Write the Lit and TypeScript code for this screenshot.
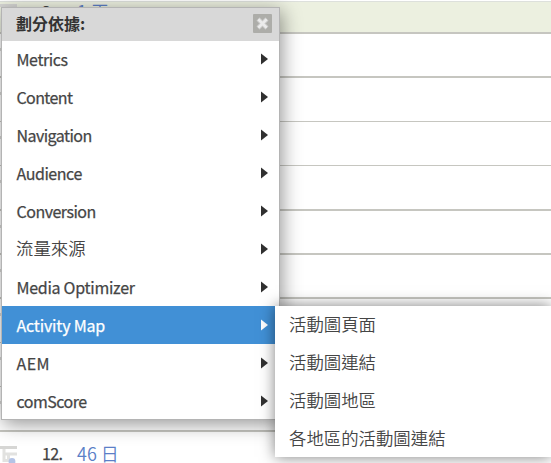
import { LitElement, html, css } from "lit";
import { customElement, property } from "lit/decorators.js";
import { classMap } from "lit/directives/class-map.js";
import { styleMap } from "lit/directives/style-map.js";

interface Entry {
  label: string;
  cjk?: boolean;
  tracking?: number;
  active?: boolean;
}

const entries: Entry[] = [
  { label: "Metrics", tracking: -0.4 },
  { label: "Content", tracking: -0.6 },
  { label: "Navigation", tracking: -0.55 },
  { label: "Audience", tracking: -0.45 },
  { label: "Conversion", tracking: -0.5 },
  { label: "流量來源", cjk: true },
  { label: "Media Optimizer", tracking: -0.28 },
  { label: "Activity Map", tracking: -0.18 },
  { label: "AEM", tracking: 0.4 },
  { label: "comScore", tracking: -0.5 },
];
entries[7].active = true;

const subEntries = ["活動圖頁面", "活動圖連結", "活動圖地區", "各地區的活動圖連結"];

interface Row {
  rank?: number;
  label?: string;
  thin?: boolean;
}

const rows: Row[] = [
  { rank: 2, label: "1 天" },
  {},
  { thin: true },
  { thin: true },
  {},
  {},
  {},
  { thin: true },
  { thin: true },
  {},
  { rank: 12, label: "46 日" },
];

@customElement("breakdown-icon")
class BreakdownIcon extends LitElement {
  static styles = css`
    :host { display: block; flex: none; width: 17px; height: 20px; }
    svg { display: block; }
  `;
  render() {
    return html`<svg width="17" height="20" viewBox="0 0 17 20">
      <path d="M0 1.5H17" stroke="#d6d6d4" stroke-width="3"/>
      <path d="M4 3V14.5H9M4 8H17M8.5 8V13" fill="none" stroke="#e2e2e0" stroke-width="3"/>
      <circle cx="12" cy="15.5" r="3.4" fill="#b4c3e6"/>
    </svg>`;
  }
}

@customElement("report-row")
class ReportRow extends LitElement {
  @property({ attribute: false }) row: Row = {};
  static styles = css`
    :host { display: flex; box-sizing: border-box; overflow: hidden; padding-top: 14px; }
    .rank { width: 35px; margin: -3px 0 0 25px; font-size: 16px; line-height: 20px; color: #444; letter-spacing: -0.6px; -webkit-text-stroke: 0.25px currentColor; }
    .label { margin-top: -3px; font-size: 18px; line-height: 20px; color: #5b7fc7; font-weight: 350; }
  `;
  render() {
    const { rank, label } = this.row;
    return html`<breakdown-icon></breakdown-icon>
      ${label ? html`<span class="rank">${rank}.</span><span class="label">${label}</span>` : null}`;
  }
}

@customElement("menu-item")
class MenuItem extends LitElement {
  @property({ attribute: false }) entry!: Entry;
  static styles = css`
    :host { display: block; }
    .item { display: flex; align-items: center; justify-content: space-between; height: 38px; padding: 0 11px 0 14.5px; box-sizing: border-box; color: #454545; font-size: 16px; line-height: 24px; white-space: nowrap; }
    .item span { margin-top: -1px; -webkit-text-stroke: 0.25px currentColor; }
    .item.cjk span { font-size: 17.4px; font-weight: 350; margin: -2px 0 0 -0.5px; -webkit-text-stroke: 0; }
    .active { background: #4190d6; color: #fff; }
    svg { display: block; margin-top: -1px; fill: #303030; }
    .active svg { fill: #fff; }
  `;
  render() {
    const e = this.entry;
    return html`<div class=${classMap({ item: true, cjk: !!e.cjk, active: !!e.active })}>
      <span style=${styleMap({ letterSpacing: `${e.tracking ?? 0}px` })}>${e.label}</span>
      <svg width="7" height="12" viewBox="0 0 7 12"><path d="M0 0.5L7 6L0 11.5Z"/></svg>
    </div>`;
  }
}

@customElement("app-root")
class AppRoot extends LitElement {
  static styles = css`
    :host { display: block; position: relative; width: 551px; height: 463px; overflow: hidden; background: #fff; font-family: "Noto Sans CJK TC", "Noto Sans", sans-serif; }
    .report { display: grid; padding-top: 1px; grid-template-rows: 33px 44px 44px 44px 45px 44px 44px 44px 44px 45px 44px; }
    .report report-row { border-bottom: 2px solid #c6c6c0; }
    .report report-row.thin { border-bottom-width: 1px; }
    .report report-row.first { background: #ecf0e0; border-top: 1px solid #dde0dc; padding-top: 2px; }
    .menu { position: absolute; left: 1px; top: 7px; width: 279px; height: 413px; box-sizing: border-box; border: 1px solid #b4b4b4; background: #fff; box-shadow: 2px 4px 18px rgba(0, 0, 0, 0.42); }
    .head { display: flex; align-items: center; justify-content: space-between; height: 33px; padding: 0 7px 0 14px; box-sizing: border-box; background: #d8d8d8; color: #333; font-size: 16px; font-weight: 700; }
    .head span { margin-top: -4px; }
    .head svg { display: block; margin-top: -2px; }
    .list { margin-top: -1px; }
    .sub { position: absolute; left: 275px; top: 306px; width: 276px; height: 151px; background: #fff; box-shadow: 0 0 14px rgba(0, 0, 0, 0.5); color: #454545; font-size: 17.4px; font-weight: 350; }
    .sub div { display: flex; align-items: center; height: 38px; padding: 0 0 3px 14px; box-sizing: border-box; white-space: nowrap; }
  `;
  render() {
    return html`
      <div class="report">
        ${rows.map((r, i) => html`<report-row
          class=${classMap({ first: i === 0, thin: !!r.thin })} .row=${r}></report-row>`)}
      </div>
      <div class="menu">
        <div class="head"><span>劃分依據:</span>
          <svg width="19" height="19" viewBox="0 0 19 19">
            <rect width="19" height="19" rx="1" fill="#adada9"/>
            <path d="M5 5L14 14M14 5L5 14" stroke="#c6c6c4" stroke-width="4.6"/>
            <path d="M5.3 5.3L13.7 13.7M13.7 5.3L5.3 13.7" stroke="#ebebeb" stroke-width="2.8"/>
          </svg>
        </div>
        <div class="list">${entries.map((e) => html`<menu-item .entry=${e}></menu-item>`)}</div>
      </div>
      <div class="sub">${subEntries.map((t) => html`<div>${t}</div>`)}</div>
    `;
  }
}
